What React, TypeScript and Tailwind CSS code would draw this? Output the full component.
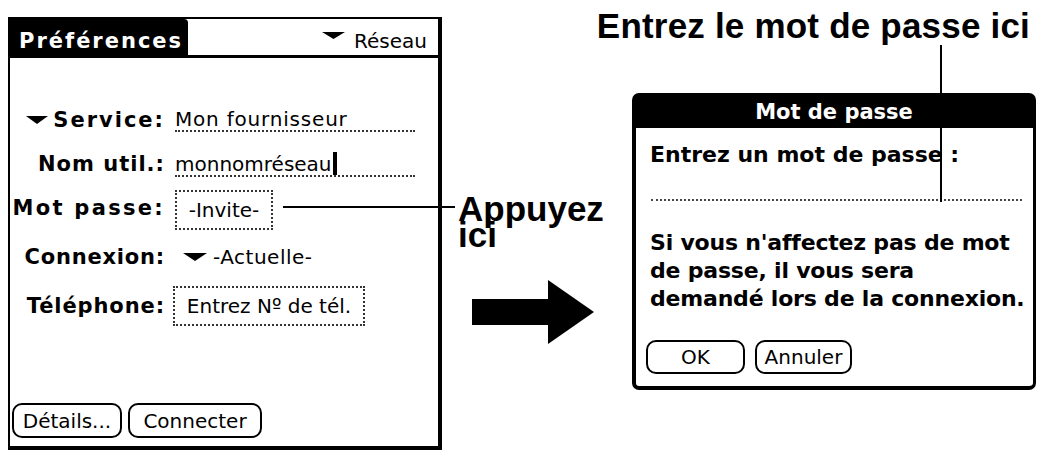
import React from "react";

function Tri({ w = 22, h = 8 }: { w?: number; h?: number }) {
  return (
    <svg width={w} height={h} viewBox={`0 0 ${w} ${h}`} className="shrink-0">
      <polygon points={`0,0 ${w},0 ${w / 2},${h}`} fill="black" />
    </svg>
  );
}

function PalmButton({ label, w }: { label: string; w: string }) {
  return (
    <div
      className={`${w} h-[35px] border-2 border-black rounded-[10px] flex items-center justify-center text-[20px] leading-[24px]`}
    >
      {label}
    </div>
  );
}

export default function App() {
  return (
    <div className="relative w-[1042px] h-[451px] bg-white overflow-hidden flex text-black">
      {/* Left: Palm preferences screen */}
      <div className="ml-[8px] mt-[17px] w-[434px] h-[433px] shrink-0 border-t-2 border-l-2 border-r-4 border-b-4 border-black flex flex-col font-['DejaVu_Sans',sans-serif]">
        {/* title bar */}
        <div className="flex h-[39px]">
          <div className="w-[178px] bg-black text-white font-bold text-[21px] leading-[24px] tracking-[2px] pl-[9px] pt-[10px] rounded-tr-[4px] whitespace-nowrap">
            Préférences
          </div>
          <div className="flex-1 border-b-[3px] border-black flex items-start justify-end pr-[11px] pt-[10px] gap-[9px]">
            <div className="mt-[3px]">
              <Tri w={23} h={7} />
            </div>
            <span className="text-[20px] leading-[24px]">Réseau</span>
          </div>
        </div>

        {/* rows */}
        <div className="flex flex-col pt-[40px]">
          <div className="flex items-center h-[44px]">
            <div className="w-[155px] flex justify-end items-center gap-[5px] font-bold text-[21px] leading-[24px] tracking-[2px]">
              <Tri w={22} h={8} />
              <span>Service:</span>
            </div>
            <div className="ml-[10px] w-[240px] border-b-2 border-dotted border-[#333] text-[20px] leading-[21px] tracking-[0.8px]">
              Mon fournisseur
            </div>
          </div>

          <div className="flex items-center h-[44px]">
            <div className="w-[155px] text-right font-bold text-[21px] leading-[24px] tracking-[1px]">
              Nom util.:
            </div>
            <div className="ml-[10px] w-[240px] border-b-2 border-dotted border-[#333] text-[20px] leading-[21px] flex items-end">
              <span>monnomréseau</span>
              <span className="ml-[1px] w-[4px] h-[23px] bg-black" />
            </div>
          </div>

          <div className="flex items-center h-[44px]">
            <div className="w-[155px] text-right font-bold text-[21px] leading-[24px] tracking-[2.3px] whitespace-nowrap">
              Mot passe:
            </div>
            <div className="ml-[10px] mt-[4px] w-[98px] h-[40px] border-2 border-dotted border-[#333] flex items-center justify-center text-[20px] leading-[24px]">
              -Invite-
            </div>
          </div>

          <div className="flex items-center h-[54px]">
            <div className="w-[155px] text-right font-bold text-[21px] leading-[24px] tracking-[0.8px]">
              Connexion:
            </div>
            <div className="ml-[18px] flex items-center gap-[6px]">
              <Tri w={24} h={8} />
              <span className="text-[20px] leading-[24px] tracking-[0.5px]">-Actuelle-</span>
            </div>
          </div>

          <div className="flex items-center h-[44px]">
            <div className="w-[155px] text-right font-bold text-[21px] leading-[24px] tracking-[0.9px]">
              Téléphone:
            </div>
            <div className="ml-[8px] w-[192px] h-[40px] border-2 border-dotted border-[#333] flex items-center justify-center text-[20px] leading-[24px] whitespace-nowrap">
              Entrez Nº de tél.
            </div>
          </div>
        </div>

        {/* bottom buttons */}
        <div className="mt-auto flex gap-[6px] pl-[2px] pb-[8px]">
          <PalmButton label="Détails..." w="w-[110px]" />
          <PalmButton label="Connecter" w="w-[134px]" />
        </div>
      </div>

      {/* Right area */}
      <div className="flex-1 flex flex-col">
        <div className="mt-[8px] pr-[12px] text-right font-['Liberation_Sans',Arial,sans-serif] font-bold text-[35px] leading-[36px] tracking-[0.2px] whitespace-nowrap">
          Entrez le mot de passe ici
        </div>

        <div className="mt-[49px] flex">
          {/* middle: callout and arrow */}
          <div className="w-[190px] flex flex-col">
            <div className="mt-[103px] pl-[16px] font-['Liberation_Sans',Arial,sans-serif] font-bold text-[35px] leading-[26px]">
              Appuyez
              <br />
              ici
            </div>
            <div className="mt-[32px] ml-[30px]">
              <svg width="122" height="64" viewBox="0 0 122 64">
                <rect x="0" y="19" width="80" height="26" fill="black" />
                <polygon points="76,0 122,32 76,64" fill="black" />
              </svg>
            </div>
          </div>

          {/* dialog */}
          <div className="w-[404px] h-[297px] flex flex-col font-['DejaVu_Sans',sans-serif]">
            <div className="h-[35px] bg-black rounded-t-[7px] text-white font-bold text-[21px] leading-[24px] text-center pt-[7px]">
              Mot de passe
            </div>
            <div className="flex-1 border-l-4 border-r-[3px] border-b-4 border-black rounded-b-[7px] flex flex-col">
              <div className="mt-[13px] ml-[14px] font-bold text-[22px] leading-[28px] whitespace-nowrap">
                Entrez un mot de passe :
              </div>
              <div className="ml-[15px] mr-[11px] h-[32px] border-b-2 border-dotted border-[#444]" />
              <div className="mt-[28px] ml-[14px] font-bold text-[22px] leading-[28px] tracking-[-0.2px] whitespace-nowrap">
                Si vous n'affectez pas de mot
                <br />
                de passe, il vous sera
                <br />
                demandé lors de la connexion.
              </div>
              <div className="mt-[27px] ml-[10px] flex gap-[10px]">
                <div className="w-[99px] h-[34px] border-2 border-black rounded-[10px] flex items-center justify-center text-[20px] leading-[24px]">
                  OK
                </div>
                <div className="w-[97px] h-[34px] border-2 border-black rounded-[10px] flex items-center justify-center text-[20px] leading-[24px]">
                  Annuler
                </div>
              </div>
            </div>
          </div>
        </div>
      </div>

      {/* callout lines (overlay) */}
      <div className="absolute left-[283px] top-[206px] w-[172px] h-[2px] bg-black" />
      <div className="absolute left-[940px] top-[45px] w-[2px] h-[157px] bg-black" />
    </div>
  );
}
